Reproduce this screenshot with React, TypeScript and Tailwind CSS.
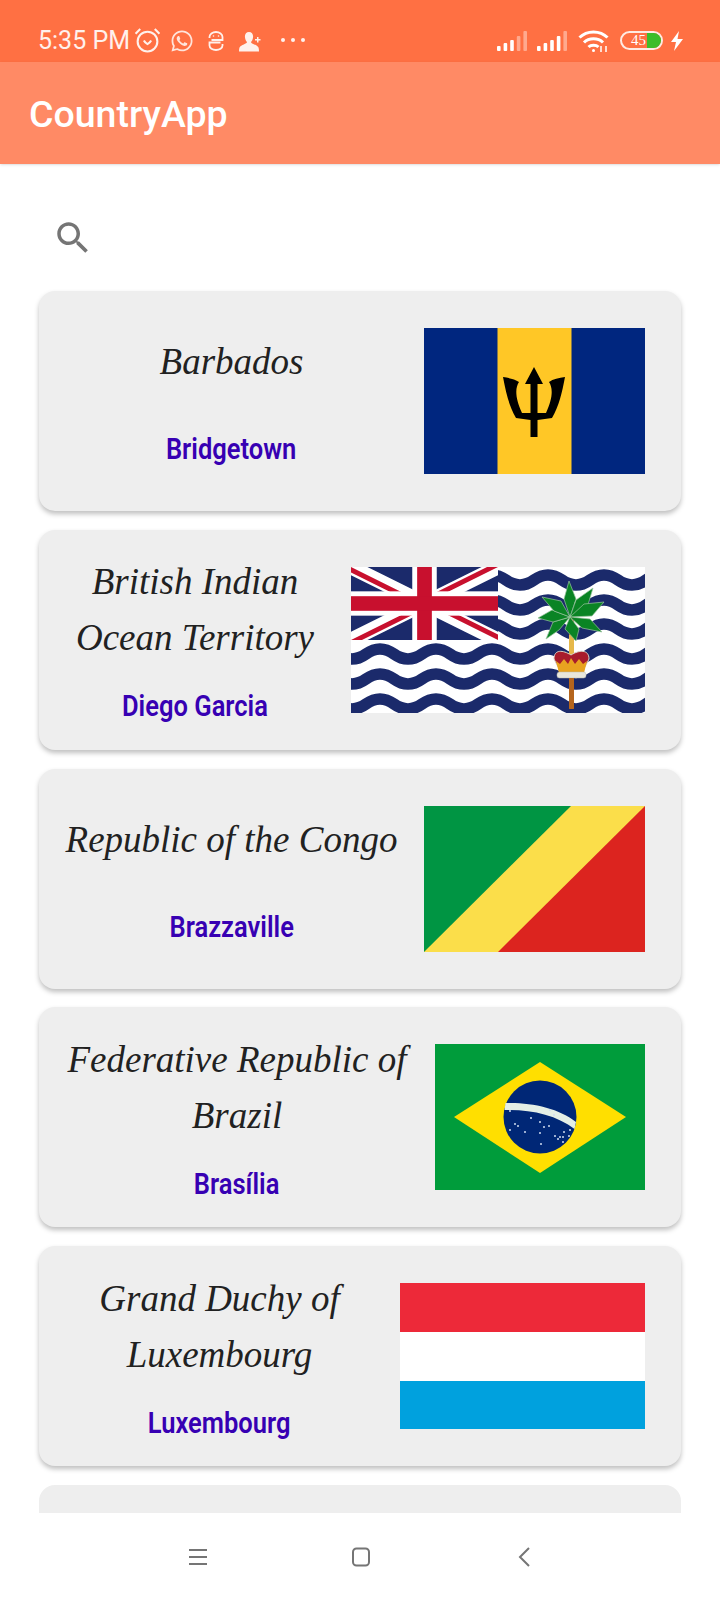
import React from 'react';
import { FaWhatsapp } from 'react-icons/fa';

const Barbados = () => (
  <svg width="221" height="146" viewBox="0 0 221 146" className="block shrink-0">
    <rect width="221" height="146" fill="#00267f" />
    <rect x="73.5" width="74" height="146" fill="#ffc726" />
    <path d="M79 49C85 50 91 51 95 54C91 60 91 70 98 85L106.500 85L106.500 56L101 56L110 39L119 56L113.500 56L113.500 85L122 85C129 70 129 60 125 54C129 51 135 50 141 49C138 65 135 78 128 90L113.500 92L113.500 109L106.500 109L106.500 92L92 90C85 78 82 65 79 49Z" fill="#000" />
  </svg>
);

const waveRows = [13, 38, 62, 87, 112, 137];

const Biot = () => (
  <svg width="294" height="146" viewBox="0 0 294 146" className="block shrink-0">
    <rect width="294" height="146" fill="#fff" />
    {waveRows.map((y) => (
      <path
        key={y}
        d={`M-41 ${y}Q-27 ${y - 10} -13 ${y}T15 ${y}T43 ${y}T71 ${y}T99 ${y}T127 ${y}T155 ${y}T183 ${y}T211 ${y}T239 ${y}T267 ${y}T295 ${y}T323 ${y}`}
        fill="none"
        stroke="#1b2a6b"
        strokeWidth="11.500"
      />
    ))}
    <svg x="0" y="0" width="147" height="73" viewBox="0 0 60 30" preserveAspectRatio="none">
      <clipPath id="jack">
        <path d="M30 15H60V30ZV30H0ZH0V0ZV0H60Z" />
      </clipPath>
      <rect width="60" height="30" fill="#1b2a6b" />
      <path d="M0 0L60 30M60 0L0 30" stroke="#fff" strokeWidth="6" />
      <path d="M0 0L60 30M60 0L0 30" stroke="#c8102e" strokeWidth="4" clipPath="url(#jack)" />
      <rect x="25" width="10" height="30" fill="#fff" />
      <rect y="10" width="60" height="10" fill="#fff" />
      <rect x="27" width="6" height="30" fill="#c8102e" />
      <rect y="12" width="60" height="6" fill="#c8102e" />
    </svg>
    <rect x="218" y="50" width="5" height="92" rx="1" fill="#b5651d" />
    <rect x="218" y="68" width="5" height="22" fill="#e6b84a" />
    <g fill="#0a8424" stroke="#9cc4a0" strokeWidth="0.7">
      <path d="M219 50L213 32L218 14L225 32Z" />
      <path d="M219 50L225 33L242 21L236 41Z" />
      <path d="M219 50L233 37L253 35L241 49Z" />
      <path d="M219 50L239 52L251 65L231 61Z" />
      <path d="M219 50L228 62L225 74L214 62Z" />
      <path d="M219 50L208 63L195 72L202 55Z" />
      <path d="M219 50L202 55L187 51L201 43Z" />
      <path d="M219 50L203 44L191 30L210 34Z" />
    </g>
    <path d="M203 92C203 82 212 83 220 88C228 83 238 82 238 92L234 100H207Z" fill="#a81c2c" stroke="#d9d6c8" strokeWidth="1" />
    <path d="M205 94L209 97L213 92L217 97L220 91L224 97L228 92L232 97L236 94L233 106H208Z" fill="#e8a320" />
    <rect x="206" y="105" width="29" height="6" rx="2.500" fill="#e9e7dc" stroke="#b9b8ae" strokeWidth="0.5" />
    <rect x="218" y="111" width="5" height="31" rx="1" fill="#b5651d" />
  </svg>
);

const Congo = () => (
  <svg width="221" height="146" viewBox="0 0 221 146" className="block shrink-0">
    <rect width="221" height="146" fill="#fbde4a" />
    <path d="M0 0H147L0 146Z" fill="#009543" />
    <path d="M221 0V146H74Z" fill="#dc241f" />
  </svg>
);

const brazilStars = [
  [75, 67], [96, 74], [83, 82], [90, 88], [105, 78], [109, 83], [114, 82], [105, 89],
  [120, 92], [125, 93], [128, 93], [123, 95], [128, 98], [134, 92], [135, 86], [129, 88],
  [106, 100], [75, 86], [80, 80], [119, 71], [115, 66],
];

const Brazil = () => (
  <svg width="210" height="146" viewBox="0 0 210 146" className="block shrink-0">
    <rect width="210" height="146" fill="#009c3b" />
    <path d="M105 18L191 73L105 129L19 73Z" fill="#ffdf00" />
    <circle cx="105" cy="73" r="36.500" fill="#002776" />
    <path d="M70.500 59C95 58 124 64 141 78L139.500 85C122 71 95 65 69.500 66Z" fill="#e4efe6" />
    {brazilStars.map(([x, y]) => (
      <circle key={`${x}-${y}`} cx={x} cy={y} r="1" fill="#cfdcf0" />
    ))}
  </svg>
);

const Luxembourg = () => (
  <svg width="245" height="146" viewBox="0 0 245 146" className="block shrink-0">
    <rect width="245" height="49" fill="#ed2939" />
    <rect y="49" width="245" height="49" fill="#fff" />
    <rect y="98" width="245" height="48" fill="#00a1de" />
  </svg>
);

const countries = [
  { name: 'Barbados', capital: 'Bridgetown', flag: <Barbados /> },
  { name: 'British Indian Ocean Territory', capital: 'Diego Garcia', flag: <Biot /> },
  { name: 'Republic of the Congo', capital: 'Brazzaville', flag: <Congo /> },
  { name: 'Federative Republic of Brazil', capital: 'Brasília', flag: <Brazil /> },
  { name: 'Grand Duchy of Luxembourg', capital: 'Luxembourg', flag: <Luxembourg /> },
];

const SignalBars = ({ dim }: { dim: number }) => (
  <svg width="31" height="20" viewBox="0 0 31 20" fill="#fff">
    {[5, 8, 11, 15, 20].map((h, i) => (
      <rect key={h} x={i * 6.6} y={20 - h} width="3.6" height={h} rx="1" opacity={i >= 5 - dim ? 0.4 : 1} />
    ))}
  </svg>
);

const StatusBar = () => (
  <div className="h-[62px] shrink-0 bg-[#ff7043] flex items-center pt-[19px] pl-[38px] pr-[37px] text-white/90">
    <span className="text-[25px] leading-none font-['Roboto',sans-serif]">5:35 PM</span>
    <svg width="27" height="26" viewBox="0 0 26 25" fill="none" stroke="#fff" strokeWidth="2" className="ml-[4px] -mt-[2px] opacity-90">
      <circle cx="13" cy="14" r="9.500" />
      <path d="M1.500 6.500L6 2M24.500 6.500L20 2" />
      <path d="M9.500 13c1 2 2.500 3 3.500 3.500c1-.5 2.500-1.500 3.500-3.500" />
    </svg>
    <FaWhatsapp size={24} className="ml-[9px] opacity-90" />
    <svg width="16" height="20" viewBox="0 0 16 20" fill="none" stroke="#fff" strokeWidth="1.800" className="ml-[14px] opacity-90">
      <path d="M1.500 7V6a6.500 5 0 0 1 13 0V9H3.500" />
      <path d="M14.500 13v1.500a6.500 4.500 0 0 1-13 0v-3h11" />
      <circle cx="5.500" cy="5" r="0.800" fill="#fff" stroke="none" />
      <circle cx="10.500" cy="5" r="0.800" fill="#fff" stroke="none" />
    </svg>
    <svg width="23" height="20" viewBox="0 0 23 20" fill="#fff" className="ml-[15px] mt-[3px] opacity-90">
      <path d="M10 0c3 0 4.500 2.500 4 5.500c-.3 2-1 3.500-2 4.500c0 2 6 2.500 7.500 5.500c.4 1 .5 3 .5 4H0c0-1 .1-3 .5-4C2 12.500 8 12 8 10C7 9 6.300 7.500 6 5.500C5.500 2.500 7 0 10 0z" />
      <path d="M18 5h1.500v2h2v1.500h-2v2H18v-2h-2V7h2z" />
    </svg>
    <div className="flex gap-[6px] ml-[19px] -mt-[1px]">
      <span className="w-[4px] h-[4px] rounded-full bg-white/90" />
      <span className="w-[4px] h-[4px] rounded-full bg-white/90" />
      <span className="w-[4px] h-[4px] rounded-full bg-white/90" />
    </div>
    <div className="ml-auto flex items-center">
      <SignalBars dim={2} />
      <div className="ml-[9px]">
        <SignalBars dim={1} />
      </div>
      <svg width="31" height="24" viewBox="0 0 31 24" fill="none" stroke="#fff" strokeWidth="3" className="ml-[10px]">
        <path d="M1.500 8.500C9 1 22 1 29.500 8.500" />
        <path d="M6 13.500C11 8.500 20 8.500 25 13.500" />
        <path d="M10.500 18C13 15.500 18 15.500 20.500 18" />
        <circle cx="15.500" cy="21.500" r="1.500" fill="#fff" stroke="none" />
        <path d="M23 17v6M28 17v6" strokeWidth="1.500" />
      </svg>
      <div className="relative ml-[11px] w-[43px] h-[19px] rounded-full border-2 border-white/85 overflow-hidden flex items-center">
        <div className="absolute right-0 top-0 bottom-0 w-[14px] bg-[#3dbd2a]" />
        <span className="relative ml-[9px] text-[15px] leading-none text-white font-['Liberation_Serif',serif]">45</span>
      </div>
      <svg width="12" height="20" viewBox="0 0 12 20" fill="#fff" className="ml-[8px]">
        <path d="M8 0L0 11H5L3 20L12 8H6.500Z" />
      </svg>
    </div>
  </div>
);

const AppBar = () => (
  <div className="h-[102px] shrink-0 bg-[#ff8a65] flex items-center pt-[3px] px-[29px] shadow-sm z-10">
    <span className="text-[37.500px] leading-none text-white font-medium font-['Roboto',sans-serif]">CountryApp</span>
  </div>
);

const CountryCard = ({ name, capital, flag }: { name: string; capital: string; flag: React.ReactNode }) => (
  <div className="h-[220px] shrink-0 mx-[39px] rounded-[16px] bg-[#eeeeee] shadow-[0_3px_5px_rgba(0,0,0,0.25)] flex items-center pr-[36px]">
    <div className="flex-1 min-w-0 h-full flex flex-col items-center justify-evenly text-center px-[8px] pb-[3px]">
      <div className="text-[37px] leading-[56px] text-[#212121] italic font-['Liberation_Serif',serif]">{name}</div>
      <div className="text-[29px] leading-[32px] font-semibold text-[#3700b3] font-['Roboto',sans-serif] scale-x-[0.88]">{capital}</div>
    </div>
    {flag}
  </div>
);

const NavBar = () => (
  <div className="h-[87px] shrink-0 bg-white flex items-center pl-[188px] relative z-10">
    <svg width="20" height="18" viewBox="0 0 20 18" fill="none" stroke="#757575" strokeWidth="2" className="mr-[143px]">
      <path d="M1 2H19M1 9H19M1 16H19" />
    </svg>
    <svg width="20" height="20" viewBox="0 0 20 20" fill="none" stroke="#757575" strokeWidth="2" className="mr-[147px]">
      <rect x="2" y="1.500" width="16" height="17" rx="3.500" />
    </svg>
    <svg width="12" height="20" viewBox="0 0 12 20" fill="none" stroke="#757575" strokeWidth="2">
      <path d="M11 1L2 10L11 19" />
    </svg>
  </div>
);

export default function App() {
  return (
    <div className="w-[720px] h-[1600px] bg-white flex flex-col overflow-hidden">
      <StatusBar />
      <AppBar />
      <div className="flex-1 min-h-0 overflow-hidden flex flex-col">
        <div className="shrink-0 pl-[52px] pt-[53px] pb-[32px]">
          <svg width="42" height="42" viewBox="0 0 24 24" fill="#757575" className="block">
            <path d="M15.5 14h-.79l-.28-.27C15.41 12.59 16 11.11 16 9.5 16 5.91 13.09 3 9.5 3S3 5.91 3 9.5 5.91 16 9.5 16c1.61 0 3.09-.59 4.23-1.57l.27.28v.79l5 4.99L20.49 19l-4.99-5zm-6 0C7.01 14 5 11.99 5 9.500S7.01 5 9.500 5 14 7.010 14 9.500 11.990 14 9.500 14z" />
          </svg>
        </div>
        <div className="flex flex-col gap-[18.800px]">
          {countries.map((c) => (
            <CountryCard key={c.name} name={c.name} capital={c.capital} flag={c.flag} />
          ))}
          <div className="h-[220px] shrink-0 mx-[39px] rounded-[16px] bg-[#eeeeee]" />
        </div>
      </div>
      <NavBar />
    </div>
  );
}
